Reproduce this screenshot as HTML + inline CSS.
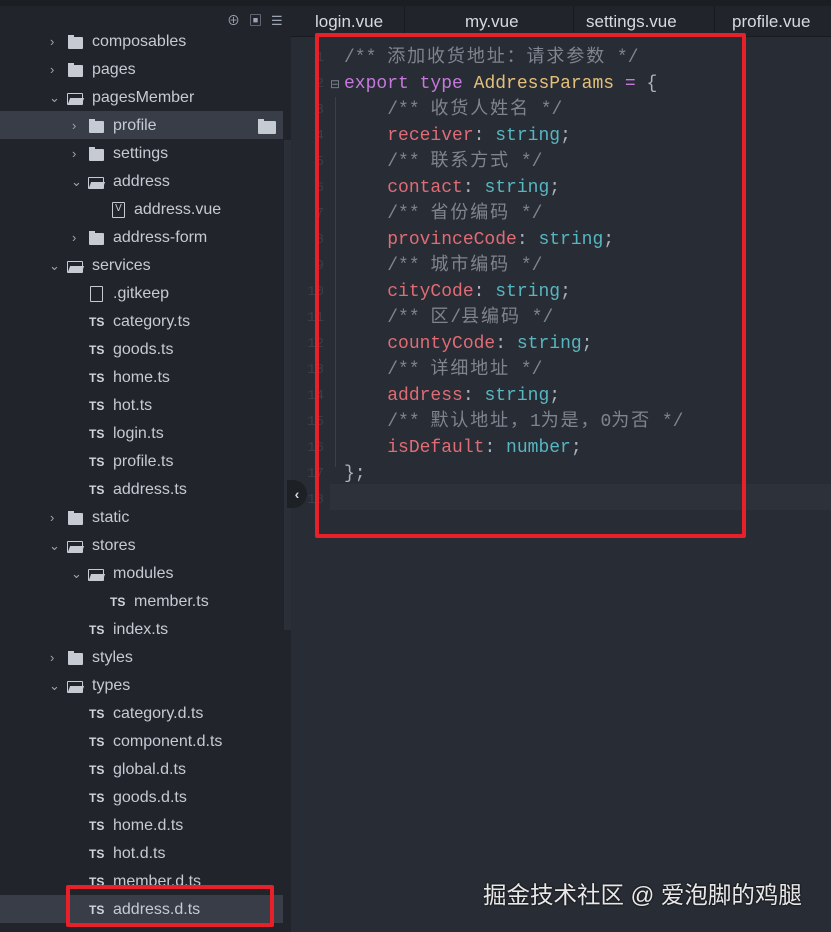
<!DOCTYPE html>
<html><head><meta charset="utf-8"><style>
*{margin:0;padding:0;box-sizing:border-box}
body{width:831px;height:932px;background:#282c34;overflow:hidden;position:relative;font-family:"Liberation Sans","Noto Sans CJK SC",sans-serif}
#side{position:absolute;left:0;top:0;width:291px;height:932px;background:#21252b}
.top{position:absolute;left:0;top:0;width:831px;height:6px;background:#1b1e23}
.row{position:absolute;left:0;height:28px;width:283px;color:#c5cad3;font-size:16px;line-height:30px}
.row.sel{background:#383d48}
.row span{position:absolute}
.chev{color:#9da5b4;font-size:13px}
.fold{position:absolute;width:15px;height:12px;background:#c5cad3;top:10px;border-radius:1px}
.fold:before{content:"";position:absolute;left:0;top:-2px;width:6px;height:3px;background:#c5cad3}
.open{position:absolute;width:16px;height:12px;border:1.5px solid #c5cad3;top:10px;border-radius:1px}
.open:after{content:"";position:absolute;left:1px;right:-1px;bottom:0;height:6px;background:#c5cad3;transform:skewX(-20deg)}
.ts{font-size:12px;font-weight:bold;color:#d0d4dc}
.file{position:absolute;width:13px;height:16px;border:1.5px solid #c5cad3;top:7px;border-radius:1px}
#scroll{position:absolute;left:284px;top:140px;width:7px;height:490px;background:#2b2f37}
.tab{position:absolute;top:6px;height:30px;line-height:32px;color:#d7dae0;font-size:17px;background:#21252b}
.tabs{position:absolute;left:291px;top:6px;width:540px;height:30px;background:#21252b}
.code{position:absolute;left:0;font-family:"Liberation Mono","Noto Sans CJK SC",monospace;font-size:18px;line-height:26px;white-space:pre;color:#abb2bf}
.c{color:#7f848e}.k{color:#c678dd}.y{color:#e5c07b}.p{color:#e06c75}.s{color:#56b6c2}
.z{font-weight:normal;letter-spacing:1.9px}
.ln{position:absolute;left:300px;width:24px;text-align:right;font-family:"Liberation Mono",monospace;font-size:14px;color:#3a3f4a;line-height:26px}
.box{position:absolute;border:4px solid #e8202a;border-radius:2px}
</style></head><body>
<div id="side"></div>
<div class="top"></div>
<div style="position:absolute;left:227px;top:10px;color:#9da5b4;font-size:13px;letter-spacing:9px">⊕▣☰</div>
<div id="scroll"></div>

<div class="row" style="top:27px"><span class="chev" style="left:50px">›</span><i class="fold" style="left:68px"></i><span style="left:92px">composables</span></div>
<div class="row" style="top:55px"><span class="chev" style="left:50px">›</span><i class="fold" style="left:68px"></i><span style="left:92px">pages</span></div>
<div class="row" style="top:83px"><span class="chev" style="left:49px">⌄</span><i class="open" style="left:67px"></i><span style="left:92px">pagesMember</span></div>
<div class="row sel" style="top:111px"><span class="chev" style="left:72px">›</span><i class="fold" style="left:89px"></i><span style="left:113px">profile</span><i class="fold" style="left:258px;width:18px;height:13px"></i></div>
<div class="row" style="top:139px"><span class="chev" style="left:72px">›</span><i class="fold" style="left:89px"></i><span style="left:113px">settings</span></div>
<div class="row" style="top:167px"><span class="chev" style="left:71px">⌄</span><i class="open" style="left:88px"></i><span style="left:113px">address</span></div>
<div class="row" style="top:195px"><i class="file" style="left:112px;font-size:10px;line-height:12px;font-style:normal;text-align:center;color:#c5cad3">V</i><span style="left:134px">address.vue</span></div>
<div class="row" style="top:223px"><span class="chev" style="left:72px">›</span><i class="fold" style="left:89px"></i><span style="left:113px">address-form</span></div>
<div class="row" style="top:251px"><span class="chev" style="left:49px">⌄</span><i class="open" style="left:67px"></i><span style="left:92px">services</span></div>
<div class="row" style="top:279px"><i class="file" style="left:90px"></i><span style="left:113px">.gitkeep</span></div>
<div class="row" style="top:307px"><span class="ts" style="left:89px">TS</span><span style="left:113px">category.ts</span></div>
<div class="row" style="top:335px"><span class="ts" style="left:89px">TS</span><span style="left:113px">goods.ts</span></div>
<div class="row" style="top:363px"><span class="ts" style="left:89px">TS</span><span style="left:113px">home.ts</span></div>
<div class="row" style="top:391px"><span class="ts" style="left:89px">TS</span><span style="left:113px">hot.ts</span></div>
<div class="row" style="top:419px"><span class="ts" style="left:89px">TS</span><span style="left:113px">login.ts</span></div>
<div class="row" style="top:447px"><span class="ts" style="left:89px">TS</span><span style="left:113px">profile.ts</span></div>
<div class="row" style="top:475px"><span class="ts" style="left:89px">TS</span><span style="left:113px">address.ts</span></div>
<div class="row" style="top:503px"><span class="chev" style="left:50px">›</span><i class="fold" style="left:68px"></i><span style="left:92px">static</span></div>
<div class="row" style="top:531px"><span class="chev" style="left:49px">⌄</span><i class="open" style="left:67px"></i><span style="left:92px">stores</span></div>
<div class="row" style="top:559px"><span class="chev" style="left:71px">⌄</span><i class="open" style="left:88px"></i><span style="left:113px">modules</span></div>
<div class="row" style="top:587px"><span class="ts" style="left:110px">TS</span><span style="left:134px">member.ts</span></div>
<div class="row" style="top:615px"><span class="ts" style="left:89px">TS</span><span style="left:113px">index.ts</span></div>
<div class="row" style="top:643px"><span class="chev" style="left:50px">›</span><i class="fold" style="left:68px"></i><span style="left:92px">styles</span></div>
<div class="row" style="top:671px"><span class="chev" style="left:49px">⌄</span><i class="open" style="left:67px"></i><span style="left:92px">types</span></div>
<div class="row" style="top:699px"><span class="ts" style="left:89px">TS</span><span style="left:113px">category.d.ts</span></div>
<div class="row" style="top:727px"><span class="ts" style="left:89px">TS</span><span style="left:113px">component.d.ts</span></div>
<div class="row" style="top:755px"><span class="ts" style="left:89px">TS</span><span style="left:113px">global.d.ts</span></div>
<div class="row" style="top:783px"><span class="ts" style="left:89px">TS</span><span style="left:113px">goods.d.ts</span></div>
<div class="row" style="top:811px"><span class="ts" style="left:89px">TS</span><span style="left:113px">home.d.ts</span></div>
<div class="row" style="top:839px"><span class="ts" style="left:89px">TS</span><span style="left:113px">hot.d.ts</span></div>
<div class="row" style="top:867px"><span class="ts" style="left:89px">TS</span><span style="left:113px">member.d.ts</span></div>
<div class="row sel" style="top:895px"><span class="ts" style="left:89px">TS</span><span style="left:113px">address.d.ts</span></div>

<div class="tabs"></div>
<div class="tab" style="left:315px">login.vue</div>
<div style="position:absolute;left:404px;top:6px;width:1px;height:30px;background:#181a1f"></div>
<div class="tab" style="left:465px">my.vue</div>
<div style="position:absolute;left:573px;top:6px;width:1px;height:30px;background:#181a1f"></div>
<div class="tab" style="left:586px">settings.vue</div>
<div style="position:absolute;left:714px;top:6px;width:1px;height:30px;background:#181a1f"></div>
<div class="tab" style="left:732px">profile.vue</div>
<div style="position:absolute;left:291px;top:36px;width:540px;height:1px;background:#181a1f"></div>

<div style="position:absolute;left:330px;top:484px;width:501px;height:26px;background:#2c313a"></div>
<div style="position:absolute;left:335px;top:97px;width:1px;height:370px;background:#3b4048"></div>

<div class="ln" style="top:45px">1<br>2<br>3<br>4<br>5<br>6<br>7<br>8<br>9<br>10<br>11<br>12<br>13<br>14<br>15<br>16<br>17<br>18</div>
<div style="position:absolute;left:330px;top:77px;color:#7f848e;font-size:12px">⊟</div>

<div class="code" style="left:344px;top:45px"><span class="c">/** <b class="z">添加收货地址：请求参数</b> */</span>
<span class="k">export</span> <span class="k">type</span> <span class="y">AddressParams</span> <span class="k">=</span> {
    <span class="c">/** <b class="z">收货人姓名</b> */</span>
    <span class="p">receiver</span>: <span class="s">string</span>;
    <span class="c">/** <b class="z">联系方式</b> */</span>
    <span class="p">contact</span>: <span class="s">string</span>;
    <span class="c">/** <b class="z">省份编码</b> */</span>
    <span class="p">provinceCode</span>: <span class="s">string</span>;
    <span class="c">/** <b class="z">城市编码</b> */</span>
    <span class="p">cityCode</span>: <span class="s">string</span>;
    <span class="c">/** <b class="z">区</b>/<b class="z">县编码</b> */</span>
    <span class="p">countyCode</span>: <span class="s">string</span>;
    <span class="c">/** <b class="z">详细地址</b> */</span>
    <span class="p">address</span>: <span class="s">string</span>;
    <span class="c">/** <b class="z">默认地址，</b>1<b class="z">为是，</b>0<b class="z">为否</b> */</span>
    <span class="p">isDefault</span>: <span class="s">number</span>;
};</div>

<div style="position:absolute;left:287px;top:480px;width:20px;height:28px;border-radius:0 14px 14px 0;background:#1d2025;color:#d7dae0;font-size:14px;line-height:28px;text-align:center;font-weight:bold">‹</div>

<div class="box" style="left:315px;top:33px;width:431px;height:505px"></div>
<div class="box" style="left:66px;top:885px;width:208px;height:42px"></div>

<div style="position:absolute;left:483px;top:876px;color:#e8e8e8;font-size:23.5px;font-family:'Liberation Sans','Noto Sans CJK SC',sans-serif;text-shadow:0 0 2px #000">掘金技术社区 @ 爱泡脚的鸡腿</div>
</body></html>
